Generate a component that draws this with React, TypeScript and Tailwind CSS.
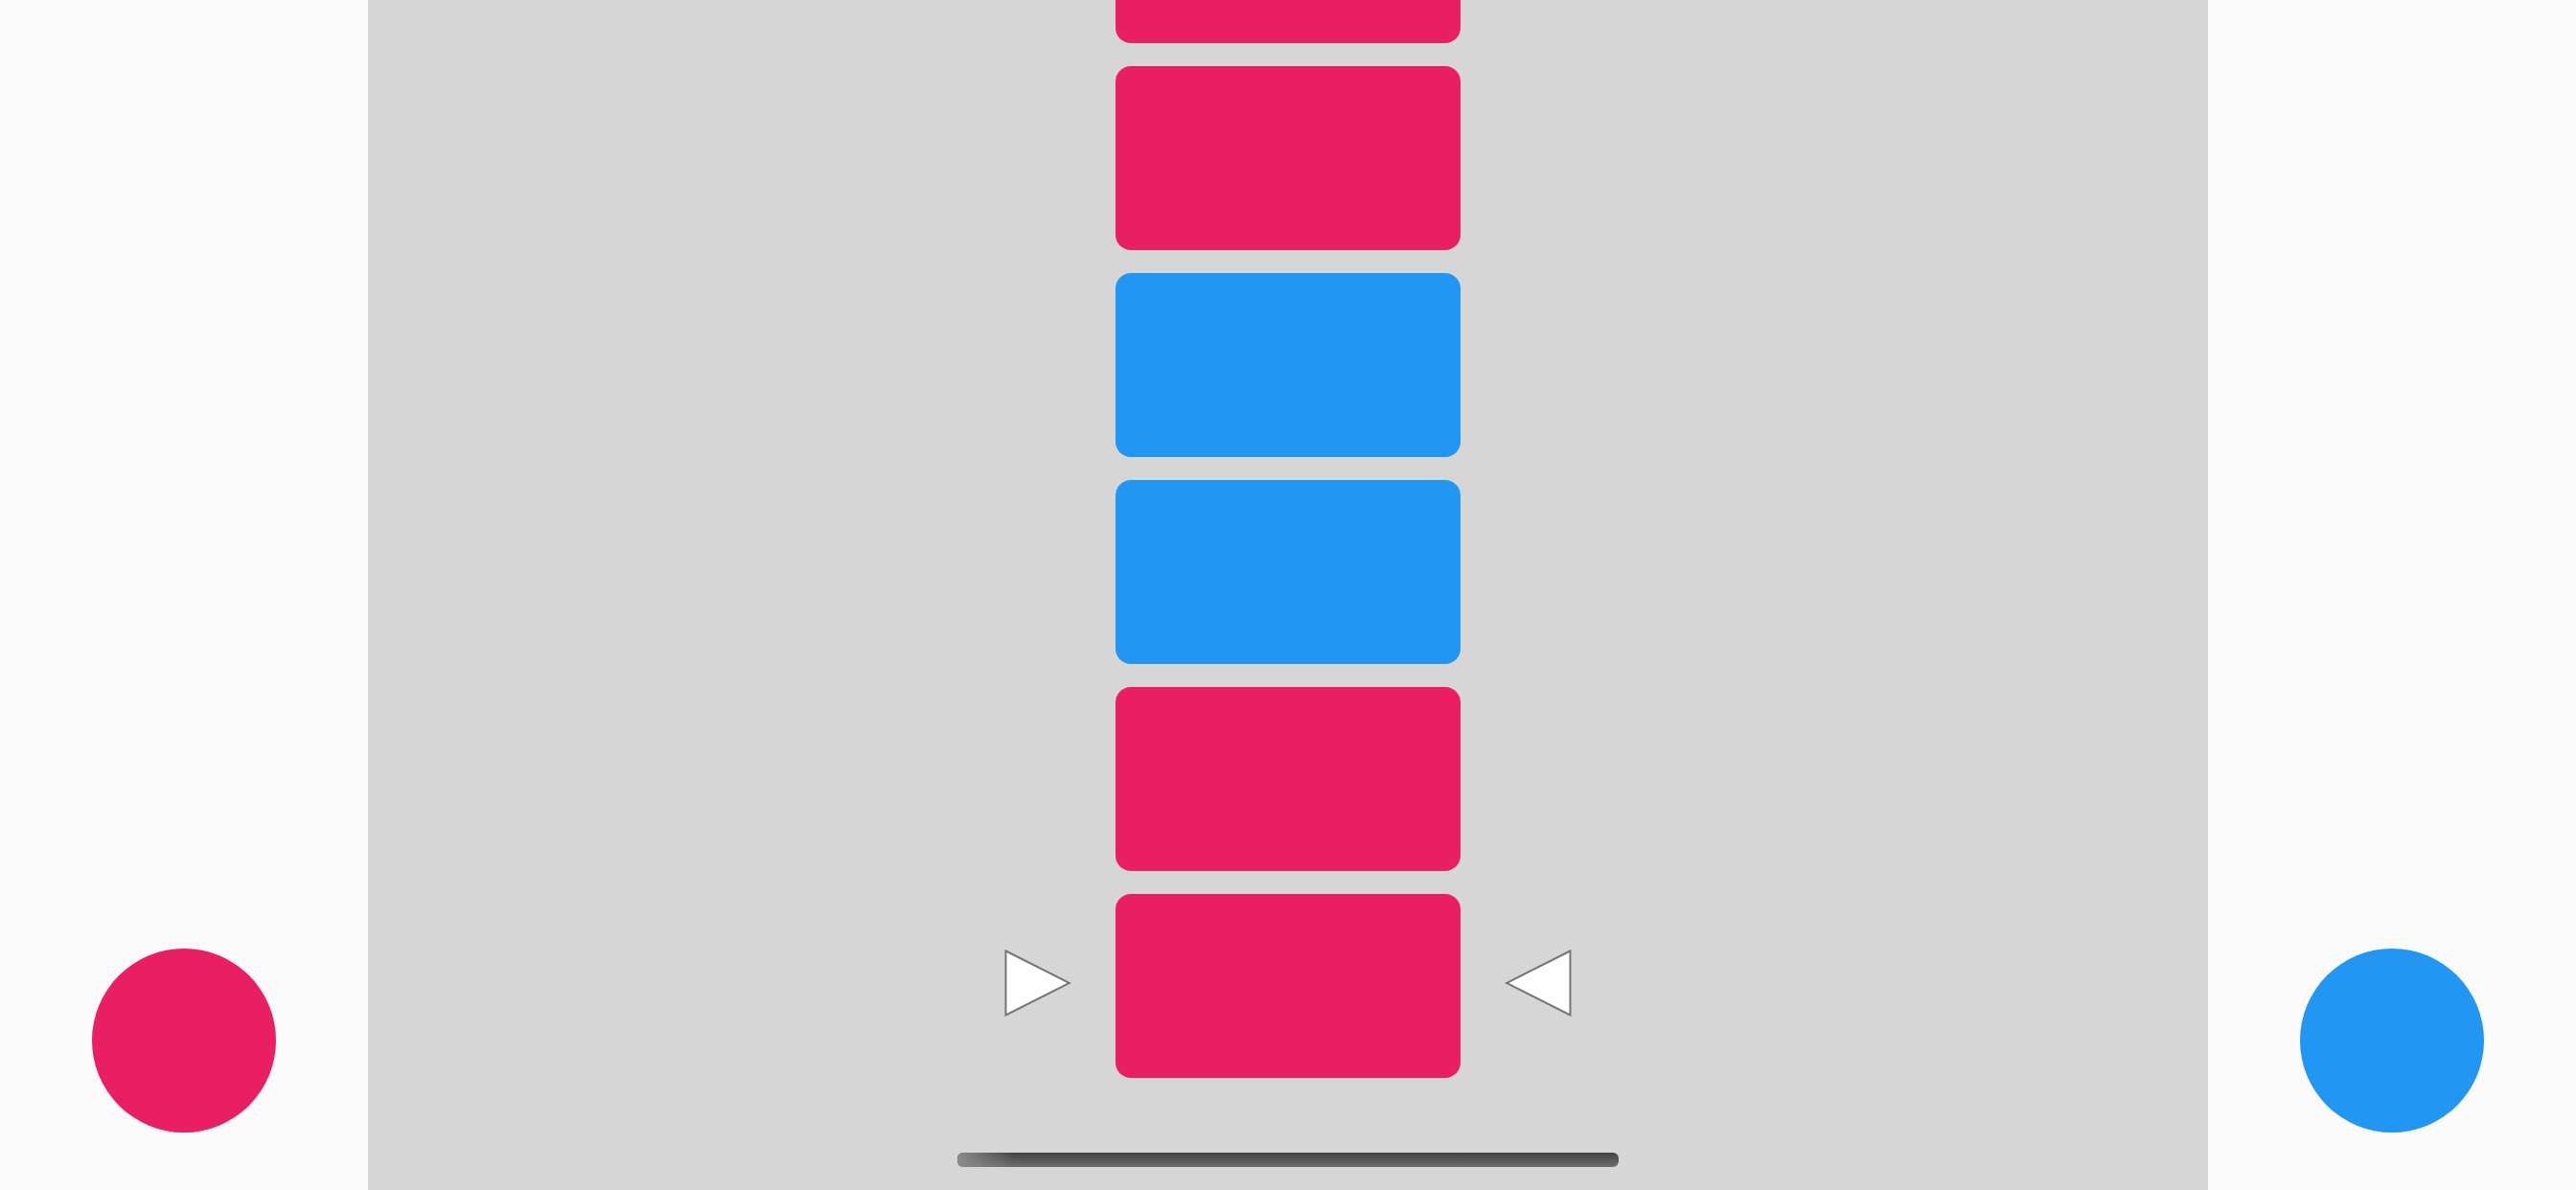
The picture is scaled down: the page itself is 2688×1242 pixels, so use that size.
import React from "react";

type Tile = { id: number; color: "pink" | "blue" };

const tiles: Tile[] = [
  { id: 1, color: "pink" },
  { id: 2, color: "pink" },
  { id: 3, color: "blue" },
  { id: 4, color: "blue" },
  { id: 5, color: "pink" },
  { id: 6, color: "pink" },
];

function Card({ color }: { color: Tile["color"] }) {
  return (
    <div
      className={
        color === "pink"
          ? "w-[360px] h-[192px] shrink-0 rounded-[16px] bg-[#e91e63]"
          : "w-[360px] h-[192px] shrink-0 rounded-[16px] bg-[#2196f3]"
      }
    />
  );
}

function Marker({ dir }: { dir: "right" | "left" }) {
  const points = dir === "right" ? "1.5,1.5 68,35 1.5,68.5" : "68.5,1.5 2,35 68.5,68.5";
  return (
    <svg width="70" height="70" viewBox="0 0 70 70" className="shrink-0 mb-[6px]">
      <polygon points={points} fill="#ffffff" stroke="#757575" strokeWidth="2" strokeLinejoin="miter" />
    </svg>
  );
}

function SidePanel({ color }: { color: "pink" | "blue" }) {
  return (
    <aside className="w-[384px] shrink-0 h-full bg-[#fafafa] flex flex-col justify-end items-center pb-[60px]">
      <div
        className={
          color === "pink"
            ? "w-[192px] h-[192px] rounded-full bg-[#e91e63]"
            : "w-[192px] h-[192px] rounded-full bg-[#2196f3]"
        }
      />
    </aside>
  );
}

export default function App() {
  const last = tiles.length - 1;
  return (
    <div className="w-[2688px] h-[1242px] flex overflow-hidden">
      <SidePanel color="pink" />

      <main className="relative flex-1 h-full bg-[#d6d6d6] overflow-hidden">
        {/* scrolled list of tiles */}
        <div className="flex flex-col items-center gap-6 -mt-[147px]">
          {tiles.map((t, i) =>
            i === last ? (
              <div key={t.id} className="flex items-center gap-[46px]">
                <Marker dir="right" />
                <Card color={t.color} />
                <Marker dir="left" />
              </div>
            ) : (
              <Card key={t.id} color={t.color} />
            )
          )}
        </div>

        {/* scroll indicator */}
        <div className="absolute bottom-[24px] left-1/2 -translate-x-1/2 w-[690px] h-[15px] rounded-[6px] overflow-hidden bg-gradient-to-b from-[#424242] to-[#6e6e6e]">
          <div className="absolute inset-y-0 left-0 w-[60px] bg-gradient-to-r from-[#8a8a8a] to-transparent" />
        </div>
      </main>

      <SidePanel color="blue" />
    </div>
  );
}
